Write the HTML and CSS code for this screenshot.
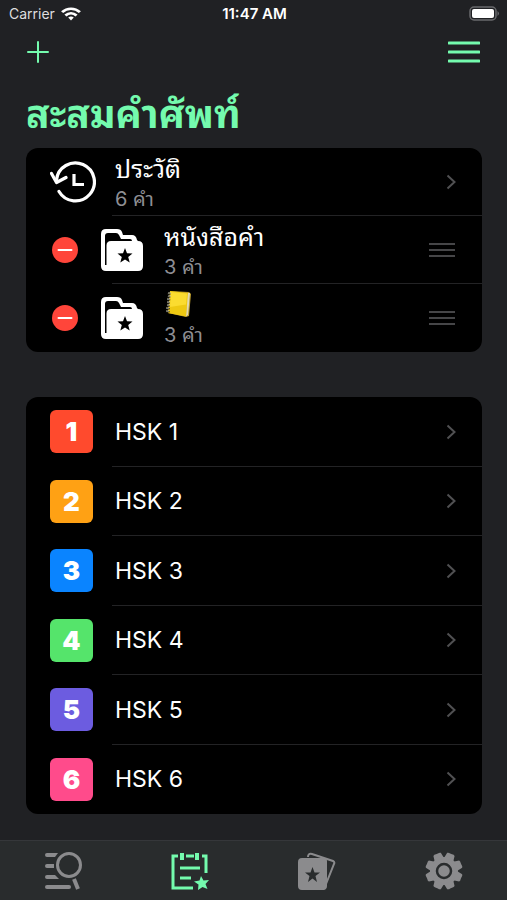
FILE: index.html
```html
<!DOCTYPE html>
<html lang="th">
<head>
<meta charset="utf-8">
<meta name="viewport" content="width=device-width, initial-scale=1">
<title>สะสมคำศัพท์</title>
<link rel="stylesheet" href="styles.css">
</head>
<body>
<svg class="defs" aria-hidden="true">
  <symbol id="chevron" viewBox="0 0 10 16"><path d="M1.5 1.5 8.5 8l-7 6.500" fill="none" stroke="currentColor" stroke-width="2"/></symbol>
  <symbol id="grip" viewBox="0 0 28 16"><path d="M1 2h26M1 8h26M1 14h26" stroke="currentColor" stroke-width="2"/></symbol>
  <symbol id="minus" viewBox="0 0 26 26"><circle cx="13" cy="13" r="13" fill="#ff453a"/><path d="M6.500 13h13" stroke="#fff" stroke-width="2" stroke-linecap="round"/></symbol>
  <symbol id="folder" viewBox="0 0 42 42">
    <path d="M5 42Q0 42 0 37V5Q0 0 5 0h11q4 0 5 3l1 3h9q4 0 5 5l1 1q5 0 5 5v20q0 5-5 5Z" fill="#fff"/>
    <path d="M4 36V7q0-3 3-3h8q2 0 3 2l2 4h9q2 0 2 2H10q-4.500 0-4.500 4.500V36Z" fill="#000"/>
    <path d="m24 19 2 5.200 5.500.3-4.300 3.500 1.500 5.400-4.700-3-4.700 3 1.500-5.400-4.300-3.500 5.500-.3Z" fill="#000"/>
  </symbol>
</svg>
<div class="app">
  <div class="status">
    <span class="carrier">Carrier
      <svg width="20" height="14" viewBox="0 0 18 14" preserveAspectRatio="none" fill="none" stroke="#fff" stroke-width="2.600"><path d="M1 5.200C5.500.5 12.500.5 17 5.200"/><path d="M4 8.500c3-3 7-3 10 0"/><path d="m6.500 10.600 2.500 3 2.500-3q-2.500-2-5 0Z" fill="#fff" stroke="none"/></svg>
    </span>
    <span class="time">11:47 AM</span>
    <svg class="battery" width="31" height="15" viewBox="0 0 31 15"><rect x="1" y="1" width="26" height="13" rx="4" fill="none" stroke="#68696c" stroke-width="1.500"/><rect x="3" y="3" width="22" height="9" rx="2" fill="#fff"/><path d="M28.500 5q3 2.500 0 5Z" fill="#68696c"/></svg>
  </div>
  <header class="nav">
    <button aria-label="เพิ่ม"><svg width="22" height="22" viewBox="0 0 22 22"><path d="M11 1v20M1 11h20" stroke="currentColor" stroke-width="2" stroke-linecap="round"/></svg></button>
    <button aria-label="เมนู"><svg width="32" height="24" viewBox="0 0 32 24"><path d="M1 3h30M1 12h30M1 21h30" stroke="currentColor" stroke-width="3" stroke-linecap="round"/></svg></button>
  </header>
  <main>
    <h1>สะสมคำศัพท์</h1>
    <ul class="group books">
      <li>
        <a class="row" href="#history">
          <svg class="history" width="46" height="42" viewBox="0 0 46 42" fill="none" stroke="#fff" stroke-width="3.200" stroke-linecap="round" stroke-linejoin="round"><path d="M6.500 19A19 19 0 1 1 9 30.500"/><path d="m1.500 12.500 5 9 9.500-5"/><path d="M24 13v10.500h10" stroke-linecap="butt" stroke-linejoin="miter"/></svg>
          <span class="text"><span class="name">ประวัติ</span><span class="count">6 คำ</span></span>
          <svg class="chevron" width="10" height="16"><use href="#chevron"/></svg>
        </a>
      </li>
      <li>
        <div class="row">
          <button class="remove" aria-label="ลบ"><svg width="26" height="26"><use href="#minus"/></svg></button>
          <svg class="folder" width="42" height="42"><use href="#folder"/></svg>
          <span class="text"><span class="name">หนังสือคำ</span><span class="count">3 คำ</span></span>
          <svg class="grip" width="28" height="16"><use href="#grip"/></svg>
        </div>
      </li>
      <li>
        <div class="row">
          <button class="remove" aria-label="ลบ"><svg width="26" height="26"><use href="#minus"/></svg></button>
          <svg class="folder" width="42" height="42"><use href="#folder"/></svg>
          <span class="text"><span class="name"><svg class="ledger" width="28" height="28" viewBox="0 0 28 28" role="img" aria-label="สมุด"><path d="m6 1 19 1 2 2-2 22-3 1-18-4Z" fill="#b99a2d"/><path d="m23 3 3 0-2 22-2 1.500Z" fill="#e0d9b4"/><path d="m6 1 18 2-2 23.500L4 23Z" fill="#eec912"/><path d="m7 2 16 1.500-1 11L6 17Z" fill="#fbdc30"/><path d="m5 3-1 20" stroke="#2b281b" stroke-width="3" stroke-dasharray="1.500 1.500"/><path d="M4 3h3M4 6h3M3 9h3M3 12h3M3 15h3M2 18h3M2 21h3" stroke="#c7c5b4"/></svg></span><span class="count">3 คำ</span></span>
          <svg class="grip" width="28" height="16"><use href="#grip"/></svg>
        </div>
      </li>
    </ul>
    <ul class="group levels">
      <li><a class="row" href="#hsk1"><span class="badge red">1</span><span class="level">HSK 1</span><svg class="chevron" width="10" height="16"><use href="#chevron"/></svg></a></li>
      <li><a class="row" href="#hsk2"><span class="badge orange">2</span><span class="level">HSK 2</span><svg class="chevron" width="10" height="16"><use href="#chevron"/></svg></a></li>
      <li><a class="row" href="#hsk3"><span class="badge blue">3</span><span class="level">HSK 3</span><svg class="chevron" width="10" height="16"><use href="#chevron"/></svg></a></li>
      <li><a class="row" href="#hsk4"><span class="badge green">4</span><span class="level">HSK 4</span><svg class="chevron" width="10" height="16"><use href="#chevron"/></svg></a></li>
      <li><a class="row" href="#hsk5"><span class="badge purple">5</span><span class="level">HSK 5</span><svg class="chevron" width="10" height="16"><use href="#chevron"/></svg></a></li>
      <li><a class="row" href="#hsk6"><span class="badge pink">6</span><span class="level">HSK 6</span><svg class="chevron" width="10" height="16"><use href="#chevron"/></svg></a></li>
    </ul>
  </main>
  <nav class="tabs">
    <a href="#search" aria-label="ค้นหา"><svg width="38" height="38" viewBox="0 0 38 38" fill="none" stroke="currentColor"><path d="M3 1h11l-3 4H3q-2 0-2-2t2-2ZM3 12h7v4H3q-2 0-2-2t2-2ZM3 23h8l4 4H3q-2 0-2-2t2-2Z" fill="currentColor" stroke="none"/><path d="M3 35h22" stroke-width="4" stroke-linecap="round"/><circle cx="25" cy="13" r="11.500" stroke-width="3"/><path d="m30 27 4 10" stroke-width="4"/></svg></a>
    <a class="active" href="#collection" aria-label="สะสมคำศัพท์"><svg width="38" height="38" viewBox="0 0 38 38" fill="none" stroke="currentColor" stroke-width="3"><path d="M7 4H2v32h20M15 4h8M31 4h4v17"/><path d="M11 1v7M26 1v7" stroke-width="4"/><path d="M9 16h20M9 26h11"/><path d="m30 24 2.500 4.500 5.500-.5-3.500 4 2 5-5-2-4.500 3 .5-5.500-4.500-3 5.500-1Z" fill="currentColor" stroke="none"/></svg></a>
    <a href="#cards" aria-label="การ์ด"><svg width="38" height="38" viewBox="0 0 38 38"><path d="M10 5q0-4 4-3l21 7q2 1 1 3l-8 20" fill="none" stroke="currentColor" stroke-width="2"/><path fill="currentColor" fill-rule="evenodd" d="M4 6h22q3 0 3 3v25q0 3-3 4H4q-4 0-4-4V10q0-4 4-4Zm10.500 9-2 5.500H7l4.500 3.500-1.500 6 4.500-3.500 4.500 3.500-1.500-6 4.500-3.500h-5.500Z"/></svg></a>
    <a href="#settings" aria-label="ตั้งค่า"><svg width="38" height="38" viewBox="-19 -19 38 38"><g fill="currentColor"><circle r="14"/><path id="tooth" d="M-5-12-4-18Q-3-19-1-18.500L1-18.500Q3-19 4-18L5-12Z" transform="rotate(22.500)"/><use href="#tooth" transform="rotate(45)"/><use href="#tooth" transform="rotate(90)"/><use href="#tooth" transform="rotate(135)"/><use href="#tooth" transform="rotate(180)"/><use href="#tooth" transform="rotate(225)"/><use href="#tooth" transform="rotate(270)"/><use href="#tooth" transform="rotate(315)"/></g><circle r="7" fill="none" stroke="#292c2d" stroke-width="2.500"/></svg></a>
  </nav>
</div>
</body>
</html>
```
FILE: styles.css
```css
* { box-sizing: border-box; }
body {
  margin: 0;
  background: #202124;
  color: #fff;
  font-family: Inter, "Noto Sans Thai Looped", "Noto Looped Thai", Garuda, Sarabun, Loma, Waree, "Noto Sans Thai", sans-serif;
}
a { color: inherit; text-decoration: none; }
button { padding: 0; border: 0; background: none; color: inherit; display: flex; }
ul { list-style: none; margin: 0; padding: 0; }
svg { flex: none; }
.defs { display: none; }
.app { min-height: 100vh; display: flex; flex-direction: column; }

.status {
  display: grid;
  grid-template-columns: 1fr auto 1fr;
  align-items: center;
  height: 27px;
  padding: 0 7px 0 9px;
  font-size: 14px;
}
.carrier { display: flex; align-items: center; gap: 6px; color: #dededf; }
.time { font-size: 15px; font-weight: 600; }
.battery { justify-self: end; }

.nav {
  display: flex;
  justify-content: space-between;
  align-items: center;
  height: 50px;
  padding: 0 27px;
  color: #74fbae;
}
main { flex: 1; padding: 11px 25px 24px 26px; }
h1 {
  margin: 0;
  height: 60px;
  line-height: 52px;
  font-size: 39px;
  font-weight: 700;
  color: #74fbae;
}

.group {
  display: grid;
  grid-auto-rows: 1fr;
  background: #000;
  border-radius: 12px;
  overflow: hidden;
}
.books { min-height: 204px; margin-bottom: 45px; }
.levels { min-height: 417px; }
.group li { display: grid; }
.row {
  display: flex;
  align-items: center;
  padding: 0 26px 0 24px;
  background: linear-gradient(#232325, #232325) right bottom / calc(100% - 86px) 1px no-repeat;
}
li:last-child .row { background: none; }
.chevron, .grip { margin-left: auto; color: #505052; }
.grip { color: #464648; }
.history + .text { margin-left: 19px; }
.remove { margin-left: 2px; }
.folder { margin-left: 23px; }
.folder + .text { margin-left: 21px; }
.text { display: flex; flex-direction: column; padding-top: 2px; }
.name { height: 31px; line-height: 31px; font-size: 25px; }
.ledger { display: block; }
.count { height: 28px; line-height: 28px; font-size: 20px; color: #8e8e93; }

.badge {
  width: 43px;
  height: 43px;
  border-radius: 6px;
  font: 900 26px/43px Inter, sans-serif;
  text-align: center;
}
.red { background: #ff4a2d; }
.orange { background: #ffa114; }
.blue { background: #0a84ff; }
.green { background: #55e46b; }
.purple { background: #6c5ce0; }
.pink { background: #ff4b8b; }
.level { margin-left: 22px; font-size: 23px; }

.tabs {
  display: grid;
  grid-template-columns: repeat(4, 1fr);
  height: 60px;
  border-top: 1px solid #35373a;
  background: #292c2d;
  color: #8b8b8d;
}
.tabs a { display: flex; align-items: center; justify-content: center; }
.tabs .active { color: #74fbae; }
```
